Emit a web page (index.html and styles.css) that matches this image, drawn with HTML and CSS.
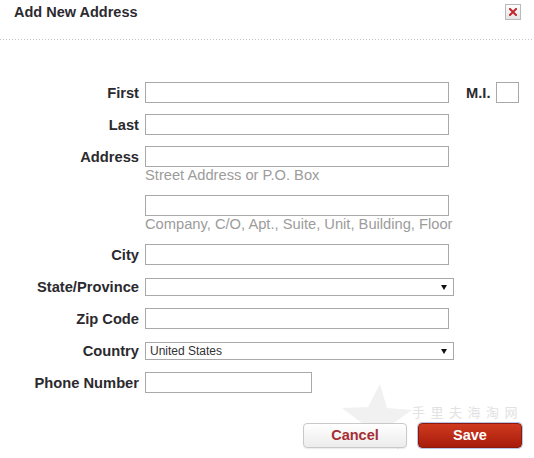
FILE: index.html
```html
<!DOCTYPE html>
<html>
<head>
<meta charset="utf-8">
<link rel="stylesheet" href="styles.css">
</head>
<body>
<div class="dialog">
  <div class="header">
    <h1 class="title">Add New Address</h1>
    <button class="close" type="button" aria-label="Close">
      <svg width="8" height="8" viewBox="0 0 8 8"><path d="M1 1 L7 7 M7 1 L1 7" stroke="#c0282d" stroke-width="2" stroke-linecap="square"/></svg>
    </button>
  </div>
  <div class="rule"></div>

  <form class="form">
    <label class="lbl">First</label>
    <div class="ctrl first-row">
      <input class="inp w304" type="text">
      <span class="mi-lbl">M.I.</span>
      <input class="inp mi" type="text">
    </div>

    <label class="lbl">Last</label>
    <div class="ctrl"><input class="inp w304" type="text"></div>

    <label class="lbl">Address</label>
    <div class="ctrl stack">
      <input class="inp w304" type="text">
      <span class="hint">Street Address or P.O. Box</span>
    </div>

    <span class="lbl"></span>
    <div class="ctrl stack">
      <input class="inp w304" type="text">
      <span class="hint">Company, C/O, Apt., Suite, Unit, Building, Floor</span>
    </div>

    <label class="lbl">City</label>
    <div class="ctrl"><input class="inp w304" type="text"></div>

    <label class="lbl">State/Province</label>
    <div class="ctrl">
      <div class="sel-wrap"><select class="sel"><option></option></select></div>
    </div>

    <label class="lbl">Zip Code</label>
    <div class="ctrl"><input class="inp w304" type="text"></div>

    <label class="lbl">Country</label>
    <div class="ctrl">
      <div class="sel-wrap"><select class="sel"><option>United States</option></select></div>
    </div>

    <label class="lbl">Phone Number</label>
    <div class="ctrl"><input class="inp w167" type="text"></div>
  </form>

  <div class="actions">
    <button class="btn cancel" type="button">Cancel</button>
    <button class="btn save" type="button">Save</button>
  </div>

  <div class="watermark" aria-hidden="true">
    <svg class="star" width="70" height="66" viewBox="0 0 70 66"><polygon points="38,0 45,24 70,26 50,40 57,66 35,50 12,64 20,39 0,24 26,23" fill="#f1f1f1"/></svg>
    <span class="wm-text">手里夫海淘网</span>
  </div>
</div>
</body>
</html>
```
FILE: styles.css
```css
* { box-sizing: border-box; }

html, body {
  margin: 0;
  padding: 0;
  background: #fff;
}

body {
  font-family: "Liberation Sans", Arial, sans-serif;
  color: #2a2a2e;
}

.dialog {
  position: relative;
  width: 534px;
  height: 458px;
  overflow: hidden;
}

.header {
  display: flex;
  justify-content: space-between;
  align-items: flex-start;
  height: 39px;
  padding: 4px 13px 0 14px;
}

.title {
  margin: 0;
  font-size: 14.5px;
  line-height: 16px;
  font-weight: bold;
  color: #2d2a30;
}

.close {
  width: 16px;
  height: 16px;
  padding: 0;
  margin: 0;
  border: 1px solid #b9b9b9;
  background: linear-gradient(#fdfdfd, #e4e4e4);
  display: flex;
  align-items: center;
  justify-content: center;
}

.close svg { display: block; }

.rule {
  height: 1px;
  background: repeating-linear-gradient(to right, #c4c4c4 0 1px, transparent 1px 3px);
}

.form {
  display: grid;
  grid-template-columns: 139px auto;
  column-gap: 6px;
  row-gap: 11px;
  margin: 42px 0 0 0;
}

.lbl {
  display: block;
  height: 21px;
  text-align: right;
  font-size: 14.7px;
  font-weight: bold;
  line-height: 20px;
  padding-top: 1px;
  color: #2a2a2e;
  white-space: nowrap;
}

.ctrl {
  display: flex;
  align-items: center;
  min-height: 21px;
}

.ctrl.stack {
  flex-direction: column;
  align-items: flex-start;
}

.inp {
  display: block;
  height: 21px;
  margin: 0;
  padding: 0 3px;
  border: 1px solid #a9a9a9;
  background: #fff;
  font-family: "Liberation Sans", Arial, sans-serif;
  font-size: 13px;
  outline: none;
}

.w304 { width: 304px; }
.w167 { width: 167px; }
.mi { width: 23px; }

.mi-lbl {
  margin-left: 17px;
  margin-right: 6px;
  height: 21px;
  font-size: 14.7px;
  font-weight: bold;
  line-height: 20px;
  padding-top: 1px;
  align-self: flex-start;
}

.first-row { align-items: flex-start; }

.hint {
  display: block;
  height: 17px;
  font-size: 14.7px;
  line-height: 17px;
  color: #9c9c9c;
  white-space: nowrap;
}

.sel-wrap {
  position: relative;
  width: 309px;
  height: 18px;
}

.sel-wrap::after {
  content: "";
  position: absolute;
  right: 7px;
  top: 7px;
  border-left: 3px solid transparent;
  border-right: 3px solid transparent;
  border-top: 5px solid #111;
  pointer-events: none;
}

.sel {
  -webkit-appearance: none;
  appearance: none;
  display: block;
  width: 309px;
  height: 18px;
  margin: 0;
  padding: 0 0 0 4px;
  border: 1px solid #a9a9a9;
  border-radius: 0;
  background: #fff;
  font-family: "Liberation Sans", Arial, sans-serif;
  font-size: 12px;
  line-height: 16px;
  color: #333;
  outline: none;
}

.actions {
  display: flex;
  justify-content: flex-end;
  gap: 11px;
  margin-top: 30px;
  padding-right: 12px;
  position: relative;
  z-index: 1;
}

.btn {
  width: 104px;
  height: 25px;
  margin: 0;
  padding: 0;
  border-radius: 4px;
  font-family: "Liberation Sans", Arial, sans-serif;
  font-size: 14.5px;
  font-weight: bold;
  line-height: 23px;
}

.cancel {
  border: 1px solid #c9c9c9;
  background: linear-gradient(#ffffff, #ececec);
  color: #a52d33;
  box-shadow: 0 1px 1px rgba(0,0,0,0.08);
}

.save {
  border: 1px solid #8c1a0c;
  background: linear-gradient(#cf3a1f, #a81c0b);
  color: #fff;
  box-shadow: 0 0 0 1px #b7c6e8;
}

.watermark {
  position: absolute;
  left: 338px;
  top: 382px;
  width: 196px;
  height: 50px;
  pointer-events: none;
}

.star {
  position: absolute;
  left: 4px;
  top: 2px;
}

.wm-text {
  position: absolute;
  left: 74px;
  top: 22px;
  font-family: "Noto Sans CJK SC", sans-serif;
  font-size: 13px;
  line-height: 16px;
  letter-spacing: 5.5px;
  color: #e2e2e2;
  white-space: nowrap;
}
```
